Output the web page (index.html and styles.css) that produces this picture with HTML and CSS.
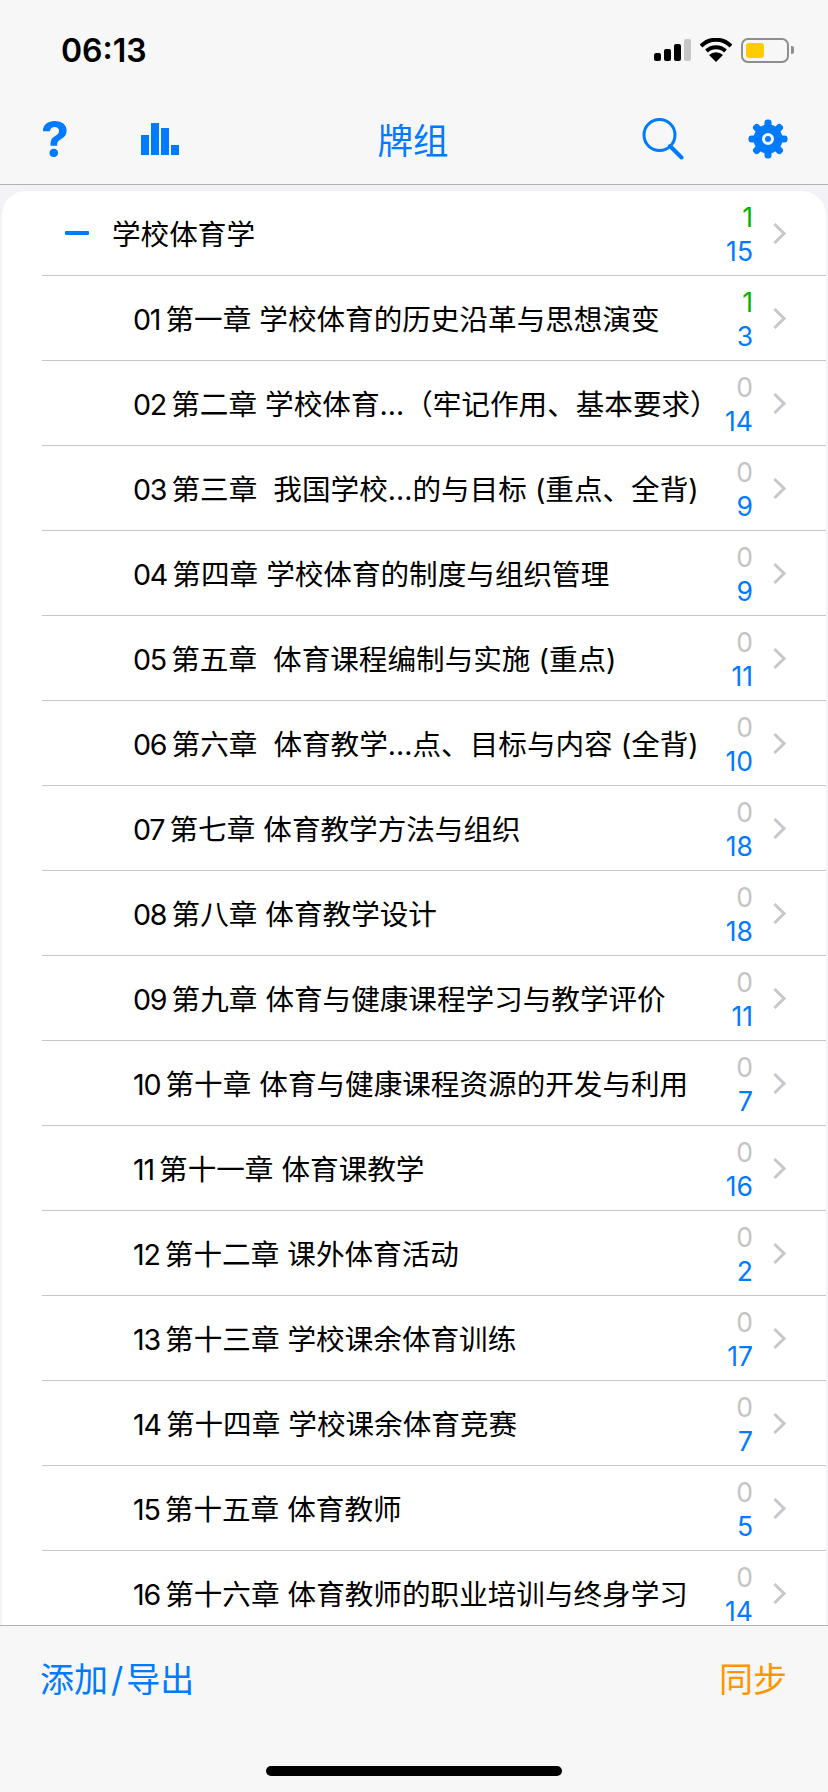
FILE: index.html
```html
<!DOCTYPE html>
<html lang="zh-CN">
<head>
  <meta charset="UTF-8">
  <title>牌组</title>
  <meta name="viewport" content="width=device-width, initial-scale=1.0">
  <link rel="stylesheet" href="styles.css">
</head>
<body>
  <div class="screen">
    <!-- Status bar and navigation -->
    <header class="top-bar">
      <div class="status-bar">
        <span class="clock">06:13</span>
        <div class="status-icons">
          <svg class="signal" width="37" height="22" viewBox="0 0 37 22">
            <rect x="0" y="14" width="7" height="8" rx="2" fill="#000"/>
            <rect x="10" y="10" width="7" height="12" rx="2" fill="#000"/>
            <rect x="20" y="5" width="7" height="17" rx="2" fill="#000"/>
            <rect x="30" y="0" width="7" height="22" rx="2" fill="#c6c6c8"/>
          </svg>
          <svg class="wifi" width="32" height="24" viewBox="0 0 32 24">
            <path d="M1 8 A21 21 0 0 1 31 8" fill="none" stroke="#000" stroke-width="4"/>
            <path d="M6.5 13 A14 14 0 0 1 25.500 13" fill="none" stroke="#000" stroke-width="4"/>
            <path d="M16 24 L9 17 A10 10 0 0 1 23 17 Z" fill="#000"/>
          </svg>
          <div class="battery"><div class="battery-level"></div></div>
          <div class="battery-nub"></div>
        </div>
      </div>
      <nav class="nav-bar">
        <span class="nav-help">?</span>
        <svg class="nav-chart" width="38" height="32" viewBox="0 0 38 32">
          <rect x="0" y="12" width="8" height="20"/>
          <rect x="10" y="0" width="8" height="32"/>
          <rect x="20" y="5" width="8" height="27"/>
          <rect x="30" y="22" width="8" height="10"/>
        </svg>
        <h1 class="nav-title">牌组</h1>
        <svg class="nav-search" width="42" height="42" viewBox="0 0 42 42">
          <circle cx="17.500" cy="17" r="15.500" fill="none" stroke="#007aff" stroke-width="3"/>
          <path d="M28 28 L39.500 39.500" fill="none" stroke="#007aff" stroke-width="4" stroke-linecap="round"/>
        </svg>
        <svg class="nav-gear" width="40" height="40" viewBox="-20 -20 40 40">
          <circle r="14.500" fill="#007aff"/>
          <g fill="#007aff">
            <rect x="-3.500" y="-19.500" width="7" height="8" rx="3"/>
            <rect x="-3.500" y="-19.500" width="7" height="8" rx="3" transform="rotate(45)"/>
            <rect x="-3.500" y="-19.500" width="7" height="8" rx="3" transform="rotate(90)"/>
            <rect x="-3.500" y="-19.500" width="7" height="8" rx="3" transform="rotate(135)"/>
            <rect x="-3.500" y="-19.500" width="7" height="8" rx="3" transform="rotate(180)"/>
            <rect x="-3.500" y="-19.500" width="7" height="8" rx="3" transform="rotate(225)"/>
            <rect x="-3.500" y="-19.500" width="7" height="8" rx="3" transform="rotate(270)"/>
            <rect x="-3.500" y="-19.500" width="7" height="8" rx="3" transform="rotate(315)"/>
          </g>
          <circle r="4.500" fill="none" stroke="#f7f7f8" stroke-width="3"/>
        </svg>
      </nav>
    </header>

    <!-- Deck list -->
    <main class="content">
      <div class="card">
        <div class="row row-parent">
          <span class="collapse-mark"></span>
          <span class="row-title">学校体育学</span>
          <div class="counts"><span class="count-new active">1</span><span class="count-total">15</span></div>
          <span class="chevron"></span>
        </div>
        <div class="row">
          <span class="row-title"><span class="row-num">01</span>&#8201;第一章 学校体育的历史沿革与思想演变</span>
          <div class="counts"><span class="count-new active">1</span><span class="count-total">3</span></div>
          <span class="chevron"></span>
        </div>
        <div class="row">
          <span class="row-title"><span class="row-num">02</span>&#8201;第二章 学校体育…（牢记作用、基本要求）</span>
          <div class="counts"><span class="count-new">0</span><span class="count-total">14</span></div>
          <span class="chevron"></span>
        </div>
        <div class="row">
          <span class="row-title"><span class="row-num">03</span>&#8201;第三章 &nbsp;我国学校…的与目标 (重点、全背)</span>
          <div class="counts"><span class="count-new">0</span><span class="count-total">9</span></div>
          <span class="chevron"></span>
        </div>
        <div class="row">
          <span class="row-title"><span class="row-num">04</span>&#8201;第四章 学校体育的制度与组织管理</span>
          <div class="counts"><span class="count-new">0</span><span class="count-total">9</span></div>
          <span class="chevron"></span>
        </div>
        <div class="row">
          <span class="row-title"><span class="row-num">05</span>&#8201;第五章 &nbsp;体育课程编制与实施 (重点)</span>
          <div class="counts"><span class="count-new">0</span><span class="count-total">11</span></div>
          <span class="chevron"></span>
        </div>
        <div class="row">
          <span class="row-title"><span class="row-num">06</span>&#8201;第六章 &nbsp;体育教学…点、目标与内容 (全背)</span>
          <div class="counts"><span class="count-new">0</span><span class="count-total">10</span></div>
          <span class="chevron"></span>
        </div>
        <div class="row">
          <span class="row-title"><span class="row-num">07</span>&#8201;第七章 体育教学方法与组织</span>
          <div class="counts"><span class="count-new">0</span><span class="count-total">18</span></div>
          <span class="chevron"></span>
        </div>
        <div class="row">
          <span class="row-title"><span class="row-num">08</span>&#8201;第八章 体育教学设计</span>
          <div class="counts"><span class="count-new">0</span><span class="count-total">18</span></div>
          <span class="chevron"></span>
        </div>
        <div class="row">
          <span class="row-title"><span class="row-num">09</span>&#8201;第九章 体育与健康课程学习与教学评价</span>
          <div class="counts"><span class="count-new">0</span><span class="count-total">11</span></div>
          <span class="chevron"></span>
        </div>
        <div class="row">
          <span class="row-title"><span class="row-num">10</span>&#8201;第十章 体育与健康课程资源的开发与利用</span>
          <div class="counts"><span class="count-new">0</span><span class="count-total">7</span></div>
          <span class="chevron"></span>
        </div>
        <div class="row">
          <span class="row-title"><span class="row-num">11</span>&#8201;第十一章 体育课教学</span>
          <div class="counts"><span class="count-new">0</span><span class="count-total">16</span></div>
          <span class="chevron"></span>
        </div>
        <div class="row">
          <span class="row-title"><span class="row-num">12</span>&#8201;第十二章 课外体育活动</span>
          <div class="counts"><span class="count-new">0</span><span class="count-total">2</span></div>
          <span class="chevron"></span>
        </div>
        <div class="row">
          <span class="row-title"><span class="row-num">13</span>&#8201;第十三章 学校课余体育训练</span>
          <div class="counts"><span class="count-new">0</span><span class="count-total">17</span></div>
          <span class="chevron"></span>
        </div>
        <div class="row">
          <span class="row-title"><span class="row-num">14</span>&#8201;第十四章 学校课余体育竞赛</span>
          <div class="counts"><span class="count-new">0</span><span class="count-total">7</span></div>
          <span class="chevron"></span>
        </div>
        <div class="row">
          <span class="row-title"><span class="row-num">15</span>&#8201;第十五章 体育教师</span>
          <div class="counts"><span class="count-new">0</span><span class="count-total">5</span></div>
          <span class="chevron"></span>
        </div>
        <div class="row">
          <span class="row-title"><span class="row-num">16</span>&#8201;第十六章 体育教师的职业培训与终身学习</span>
          <div class="counts"><span class="count-new">0</span><span class="count-total">14</span></div>
          <span class="chevron"></span>
        </div>
      </div>
    </main>

    <!-- Bottom toolbar -->
    <footer class="bottom-bar">
      <div class="toolbar">
        <span class="tool-add">添加<span class="tool-slash">/</span>导出</span>
        <span class="tool-sync">同步</span>
      </div>
      <div class="home-indicator"></div>
    </footer>
  </div>
</body>
</html>
```

FILE: styles.css
```css
html, body {
  margin: 0;
  padding: 0;
  height: 100%;
  background: #f2f2f7;
  overflow: hidden;
}
.screen {
  display: flex;
  flex-direction: column;
  width: 828px;
  height: 1792px;
  font-family: Inter, "Noto Sans CJK SC", sans-serif;
  color: #000;
}

/* Top bar */
.top-bar {
  flex: none;
  height: 185px;
  box-sizing: border-box;
  background: #f7f7f8;
  border-bottom: 1px solid #b2b2b6;
}
.status-bar {
  display: flex;
  justify-content: space-between;
  align-items: center;
  height: 100px;
  padding: 0 34px 0 61px;
}
.clock {
  font-size: 32px;
  font-weight: 600;
}
.status-icons {
  display: flex;
  align-items: center;
}
.wifi {
  margin-left: 9px;
}
.battery {
  box-sizing: border-box;
  width: 48px;
  height: 25px;
  margin-left: 9px;
  padding: 3px;
  border: 2px solid #8e8e90;
  border-radius: 7px;
}
.battery-level {
  width: 18px;
  height: 100%;
  background: #ffcc00;
  border-radius: 3px;
}
.battery-nub {
  width: 3px;
  height: 8px;
  margin-left: 2px;
  background: #8e8e90;
  border-radius: 0 2px 2px 0;
}
.nav-bar {
  display: flex;
  align-items: center;
  height: 78px;
  padding: 0 40px 0 41px;
}
.nav-help {
  width: 100px;
  font-size: 50px;
  font-weight: 700;
  line-height: 1;
  color: #007aff;
}
.nav-chart {
  fill: #007aff;
}
.nav-title {
  flex: 1;
  margin: 0 0 2px;
  padding-left: 5px;
  font-size: 35.500px;
  font-weight: 400;
  text-align: center;
  color: #007aff;
}
.nav-gear {
  margin-left: 64px;
}

/* List */
.content {
  flex: 1;
  min-height: 0;
  overflow: hidden;
  padding: 6px 2px 0;
}
.card {
  background: #fff;
  border-radius: 24px 24px 0 0;
}
.row {
  display: flex;
  align-items: center;
  box-sizing: border-box;
  height: 85px;
  margin-left: 40px;
  padding-left: 91px;
  padding-right: 43px;
  border-bottom: 1px solid #c6c6c8;
}
.row-parent {
  padding-left: 23px;
}
.collapse-mark {
  width: 24px;
  height: 4px;
  margin-right: 23px;
  background: #007aff;
  border-radius: 1px;
}
.row-title {
  flex: 1;
  margin-bottom: 2px;
  font-size: 28.600px;
  white-space: nowrap;
}
.row-num {
  letter-spacing: -1.200px;
}
.counts {
  display: flex;
  flex-direction: column;
  align-items: flex-end;
  padding-top: 1px;
  font-size: 26.500px;
  line-height: 34px;
}
.count-new {
  color: #c4c4c6;
}
.count-new.active {
  color: #00b400;
}
.count-total {
  color: #007aff;
}
.chevron {
  width: 15px;
  height: 15px;
  margin-left: 15px;
  box-sizing: border-box;
  border-top: 3.500px solid #c7c7cc;
  border-right: 3.500px solid #c7c7cc;
  transform: rotate(45deg);
}

/* Bottom toolbar */
.bottom-bar {
  flex: none;
  height: 167px;
  box-sizing: border-box;
  background: #f7f7f8;
  border-top: 1px solid #b2b2b6;
}
.toolbar {
  display: flex;
  justify-content: space-between;
  align-items: center;
  height: 102px;
  padding: 0 41px 0 40px;
  font-size: 34px;
}
.tool-add {
  color: #007aff;
}
.tool-slash {
  margin: 0 3px;
}
.tool-sync {
  color: #ff9500;
}
.home-indicator {
  width: 296px;
  height: 10px;
  margin: 38px auto 0;
  background: #000;
  border-radius: 5px;
}
```
